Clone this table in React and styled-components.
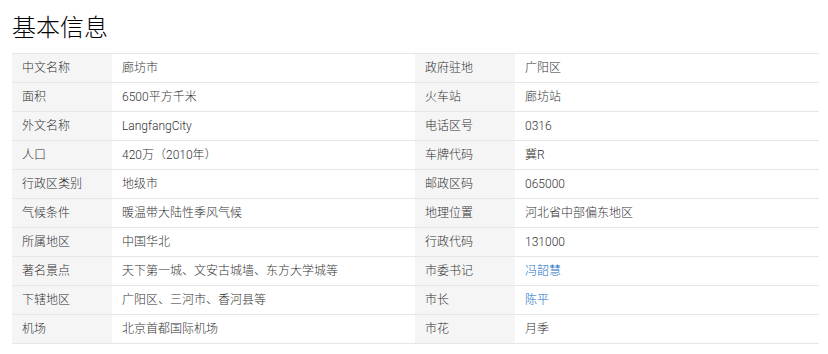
import { createGlobalStyle, styled } from "styled-components";

const GlobalStyle = createGlobalStyle`
  body {
    margin: 0;
    background: #fff;
    font-family: Roboto, "Liberation Sans", "Noto Sans CJK SC", sans-serif;
  }
`;

const rows = [
  ["中文名称", "廊坊市", "政府驻地", "广阳区"],
  ["面积", "6500平方千米", "火车站", "廊坊站"],
  ["外文名称", "LangfangCity", "电话区号", "0316"],
  ["人口", "420万（2010年）", "车牌代码", "冀R"],
  ["行政区类别", "地级市", "邮政区码", "065000"],
  ["气候条件", "暖温带大陆性季风气候", "地理位置", "河北省中部偏东地区"],
  ["所属地区", "中国华北", "行政代码", "131000"],
  ["著名景点", "天下第一城、文安古城墙、东方大学城等", "市委书记", "冯韶慧", true],
  ["下辖地区", "广阳区、三河市、香河县等", "市长", "陈平", true],
  ["机场", "北京首都国际机场", "市花", "月季"],
];

function App() {
  return (
    <Page>
      <GlobalStyle />
      <Title>基本信息</Title>
      <InfoTable>
        {rows.map(([k1, v1, k2, v2, link]) => (
          <Row key={k1}>
            <Label>{k1}</Label>
            <Value>{v1}</Value>
            <Label>{k2}</Label>
            <Value $link={link}>{v2}</Value>
          </Row>
        ))}
      </InfoTable>
    </Page>
  );
}

export default App;

const Page = styled.div`
  width: 807px;
  padding: 8px 9px 0 12px;
`;

const Title = styled.h2`
  margin: 0 0 9px;
  font-size: 24px;
  line-height: 36px;
  font-weight: 300;
  color: #000;
  font-family: "Noto Sans CJK SC", sans-serif;
`;

const InfoTable = styled.div`
  border-top: 1px solid #e6e6e6;
`;

const Row = styled.div`
  display: grid;
  grid-template-columns: 100px 303px 100px 304px;
  height: 28px;
  border-bottom: 1px solid #e6e6e6;
  font-size: 12px;
  font-weight: 300;
`;

const Label = styled.div`
  background: #f5f5f5;
  color: #333;
  padding-left: 10px;
  line-height: 28px;
`;

const Value = styled.div`
  color: ${(p) => (p.$link ? "#136ec2" : "#333")};
  padding-left: 10px;
  line-height: 28px;
`;
